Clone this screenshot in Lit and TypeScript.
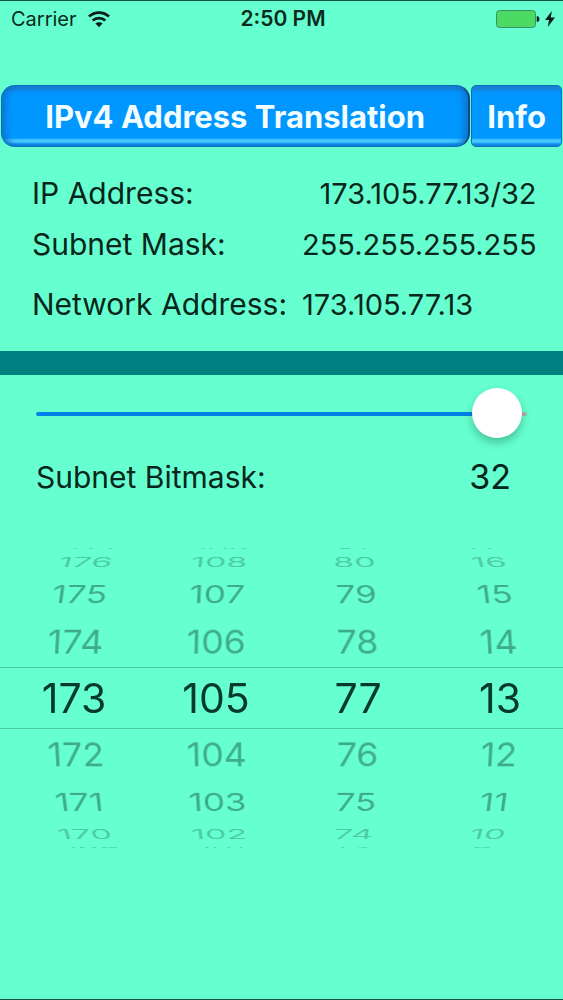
import { LitElement, html, css } from "lit";
import { customElement, property, state } from "lit/decorators.js";
import { classMap } from "lit/directives/class-map.js";

const FONT = css`Inter, "Liberation Sans", sans-serif`;

@customElement("status-bar")
class StatusBar extends LitElement {
  static styles = css`
    :host {
      display: grid;
      grid-template-columns: 1fr auto 1fr;
      align-items: center;
      height: 36px;
      padding: 0 8px 0 11px;
      font: 400 20px/24px ${FONT};
      color: #0b2b20;
    }
    .carrier,
    .power {
      display: flex;
      align-items: center;
    }
    .carrier {
      gap: 11px;
    }
    .power {
      justify-content: flex-end;
      gap: 5px;
    }
    .time {
      font-size: 21px;
      font-weight: 600;
    }
    svg {
      display: block;
    }
  `;

  render() {
    return html`
      <div class="carrier">
        <span>Carrier</span>
        <svg width="22" height="17" viewBox="0 0 22 17" fill="none" stroke="#0a1f18" stroke-width="2.8">
          <path d="M1 5.6C6.6 0.3 15.4 0.3 21 5.6" />
          <path d="M4.7 9.6C8.2 6.3 13.8 6.3 17.3 9.6" />
          <path d="M11 16.2L7.4 12.6C9.4 10.7 12.6 10.7 14.6 12.6Z" fill="#0a1f18" stroke="none" />
        </svg>
      </div>
      <span class="time">2:50 PM</span>
      <div class="power">
        <svg width="44" height="18" viewBox="0 0 44 18">
          <rect x="0.5" y="0.5" width="39" height="17" rx="3" fill="#4cd964" stroke="#3a8f63" />
          <path d="M41 6.4h0.6c2 0 2 5.2 0 5.2H41z" fill="#0a1f18" stroke="#0a1f18" stroke-width="0.6" />
        </svg>
        <svg width="10" height="16" viewBox="0 0 10 16">
          <path d="M6.8 0L0 9h4L2.8 16L10 6.4H5.8z" fill="#0a1f18" />
        </svg>
      </div>
    `;
  }
}

@customElement("wheel-column")
class WheelColumn extends LitElement {
  @property({ type: Number }) value = 0;
  @property() label = "";

  static styles = css`
    :host {
      display: block;
      transform-style: preserve-3d;
    }
    .drum {
      display: grid;
      place-items: center;
      height: 100%;
      margin: 0;
      padding: 0;
      list-style: none;
      transform-style: preserve-3d;
      transform: translateZ(-166px);
    }
    .item {
      grid-area: 1 / 1;
      font: 400 36px/48px ${FONT};
      color: rgba(0, 48, 32, 0.4);
      cursor: pointer;
      backface-visibility: hidden;
    }
    .far {
      color: rgba(0, 48, 32, 0.25);
    }
    .edge {
      color: rgba(0, 48, 32, 0.2);
    }
    .current {
      font-size: 41px;
      color: #063a2a;
    }
  `;

  private pick(n: number) {
    this.dispatchEvent(new CustomEvent("pick", { detail: n }));
  }

  render() {
    const offsets = [4, 3, 2, 1, 0, -1, -2, -3, -4];
    return html`
      <ul class="drum" role="listbox" aria-label=${this.label}>
        ${offsets.map((o) => {
          const n = this.value + o;
          if (n < 0 || n > 255) return null;
          const distance = Math.abs(o);
          return html`<li
            role="option"
            aria-selected=${o === 0 ? "true" : "false"}
            class=${classMap({ item: true, current: o === 0, far: distance === 3, edge: distance === 4 })}
            style="transform: rotateX(${o * 20}deg) translateZ(166px)"
            @click=${() => this.pick(n)}
          >${n}</li>`;
        })}
      </ul>
    `;
  }
}

@customElement("app-root")
class AppRoot extends LitElement {
  @state() private octets = [173, 105, 77, 13];
  @state() private bits = 32;

  static styles = css`
    :host {
      display: flex;
      flex-direction: column;
      box-sizing: border-box;
      min-height: 100vh;
      border-top: 1px solid #12553f;
      border-bottom: 1px solid #12553f;
      background: #66ffcf;
      font: 400 30px/40px ${FONT};
      color: #06251b;
      overflow: hidden;
    }
    .tabs {
      display: flex;
      gap: 1px;
      margin-top: 48px;
      padding: 0 1px;
    }
    .tab {
      height: 62px;
      padding: 2px 15px 0;
      border: 1px solid #0b6fc0;
      border-radius: 5px;
      background: linear-gradient(#1a7fd0 0, #1484dc 3px, #0095ff 7px, #0098ff 52px, #45c8ff 54px, #45c8ff 56px, #0f8ff0 58px, #0b7fd6 100%);
      font: 700 31px/36px ${FONT};
      color: #f2fdff;
      cursor: pointer;
    }
    .main {
      flex: 1;
      border-radius: 14px;
      border-right: 2px solid #064a80;
      box-shadow: inset 7px 0 6px -3px #0f74cc, inset -7px 0 6px -3px #0f74cc;
    }
    .facts {
      display: grid;
      grid-template-columns: auto 1fr;
      align-items: baseline;
      column-gap: 15px;
      margin: 0;
      padding: 26px 27px;
      white-space: nowrap;
    }
    .facts dt,
    .facts dd {
      margin: 0 0 10px;
    }
    .facts dd {
      text-align: right;
      font-size: 29px;
    }
    .facts dt {
      padding-left: 5px;
    }
    .facts .last {
      margin: 9px 0 0;
      text-align: left;
    }
    .divider {
      height: 24px;
      margin: 0;
      border: 0;
      background: #008080;
    }
    .mask {
      display: grid;
      grid-template-columns: 1fr auto;
      row-gap: 18px;
      padding: 14px 36px 0;
    }
    .slider {
      grid-column: 1 / -1;
      appearance: none;
      height: 50px;
      margin: 0;
      background: none;
      cursor: pointer;
    }
    .slider::-webkit-slider-runnable-track {
      height: 4px;
      border-radius: 2px;
      background: linear-gradient(90deg, #0080e8 97%, #b0b0b0 97%);
    }
    .slider::-webkit-slider-thumb {
      appearance: none;
      width: 50px;
      height: 50px;
      margin-top: -24px;
      border-radius: 50%;
      background: #fff;
      box-shadow: 0 5px 8px rgba(0, 60, 40, 0.3);
    }
    .bits {
      padding-right: 16px;
      font-size: 34px;
    }
    .picker {
      display: grid;
      grid-template-columns: repeat(4, 1fr);
      grid-template-rows: 320px;
      column-gap: 16px;
      margin-top: 41px;
      padding-left: 11px;
      perspective: 1460px;
      background: linear-gradient(#4cc9a3, #4cc9a3) 0 129px / 100% 1px no-repeat,
        linear-gradient(#4cc9a3, #4cc9a3) 0 190px / 100% 1px no-repeat;
    }
  `;

  private address(bits: number) {
    const whole = this.octets.map((o, i) => {
      const keep = Math.max(0, Math.min(8, bits - i * 8));
      return o & (256 - 2 ** (8 - keep));
    });
    return whole.join(".");
  }

  private subnetMask() {
    return this.octets
      .map((_, i) => 256 - 2 ** (8 - Math.max(0, Math.min(8, this.bits - i * 8))))
      .join(".");
  }

  private setOctet(index: number, n: number) {
    this.octets = this.octets.map((o, i) => (i === index ? n : o));
  }

  render() {
    return html`
      <status-bar></status-bar>
      <nav class="tabs">
        <button class="tab main">IPv4 Address Translation</button>
        <button class="tab">Info</button>
      </nav>
      <dl class="facts">
        <dt>IP Address:</dt>
        <dd>${this.octets.join(".")}/${this.bits}</dd>
        <dt>Subnet Mask:</dt>
        <dd>${this.subnetMask()}</dd>
        <dt class="last">Network Address:</dt>
        <dd class="last">${this.address(this.bits)}</dd>
      </dl>
      <hr class="divider" />
      <section class="mask">
        <input
          class="slider"
          id="bitmask"
          type="range"
          min="0"
          max="32.4"
          step="1"
          .value=${String(this.bits)}
          @input=${(e: Event) => (this.bits = Number((e.target as HTMLInputElement).value))}
        />
        <label for="bitmask">Subnet Bitmask:</label>
        <output class="bits" for="bitmask">${this.bits}</output>
      </section>
      <section class="picker">
        ${this.octets.map(
          (o, i) => html`<wheel-column
            .value=${o}
            label="Octet ${i + 1}"
            @pick=${(e: CustomEvent) => this.setOctet(i, e.detail)}
          ></wheel-column>`
        )}
      </section>
    `;
  }
}
